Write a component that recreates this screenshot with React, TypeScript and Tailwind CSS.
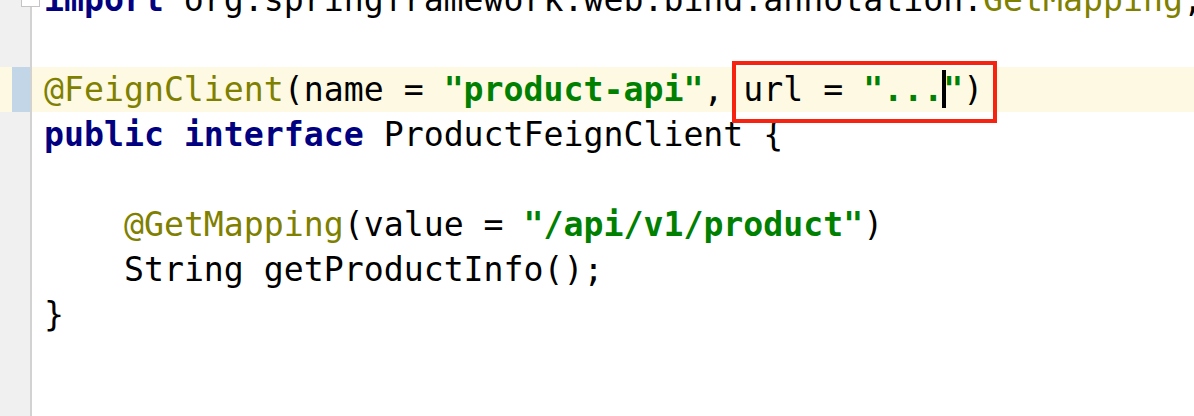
import React from "react";

const KW = ({ children }: { children: React.ReactNode }) => (
  <span className="font-bold text-[#000080]">{children}</span>
);
const AN = ({ children }: { children: React.ReactNode }) => (
  <span className="text-[#808000]">{children}</span>
);
const ST = ({ children }: { children: React.ReactNode }) => (
  <span className="font-bold text-[#008000]">{children}</span>
);

function Row({
  children,
  active = false,
  fold = false,
}: {
  children?: React.ReactNode;
  active?: boolean;
  fold?: boolean;
}) {
  return (
    <div className={`flex h-[45px] ${active ? "bg-[#fdf9e3]" : ""}`}>
      <div className={`relative flex w-[30px] shrink-0 ${active ? "" : "bg-[#f0f0f0]"}`}>
        {active && (
          <>
            <div className="w-[12px] bg-[#fdf9e3]" />
            <div className="w-[18px] bg-[#c3d6e8]" />
          </>
        )}
        {fold && (
          <div className="absolute left-[21px] top-[16px] z-10 h-[14px] w-[19px] border border-[#c4c4c4] bg-white" />
        )}
      </div>
      <div className="w-[2px] shrink-0 bg-[#d2d2d2]" />
      <div className="flex-1 whitespace-pre pl-[12px] leading-[45px] text-black">
        {children}
      </div>
    </div>
  );
}

export default function App() {
  return (
    <div
      className="h-[416px] w-[1194px] overflow-hidden bg-white text-[33.2px]"
      style={{ fontFamily: "'DejaVu Sans Mono', 'Liberation Mono', monospace" }}
    >
      <div className="-mt-[23px] flex flex-col">
        <Row fold>
          <KW>import</KW> org.springframework.web.bind.annotation.<AN>GetMapping</AN>;
        </Row>
        <Row />
        <Row active>
          <AN>@FeignClient</AN>(name = <ST>"product-api"</ST>,{" "}
          <span className="relative">
            url = <ST>"...</ST>
            <span className="relative">
              <span className="absolute -left-[1px] top-0 h-[38px] w-[4px] bg-black" />
              <ST>"</ST>
            </span>
            )
            <span className="pointer-events-none absolute -left-[11px] -right-[14px] -top-[9px] -bottom-[14px] border-4 border-[#f5230f]" />
          </span>
        </Row>
        <Row>
          <KW>public</KW> <KW>interface</KW> ProductFeignClient {"{"}
        </Row>
        <Row />
        <Row>
          {"    "}
          <AN>@GetMapping</AN>(value = <ST>"/api/v1/product"</ST>)
        </Row>
        <Row>{"    "}String getProductInfo();</Row>
        <Row>{"}"}</Row>
        <Row />
        <Row />
      </div>
    </div>
  );
}
